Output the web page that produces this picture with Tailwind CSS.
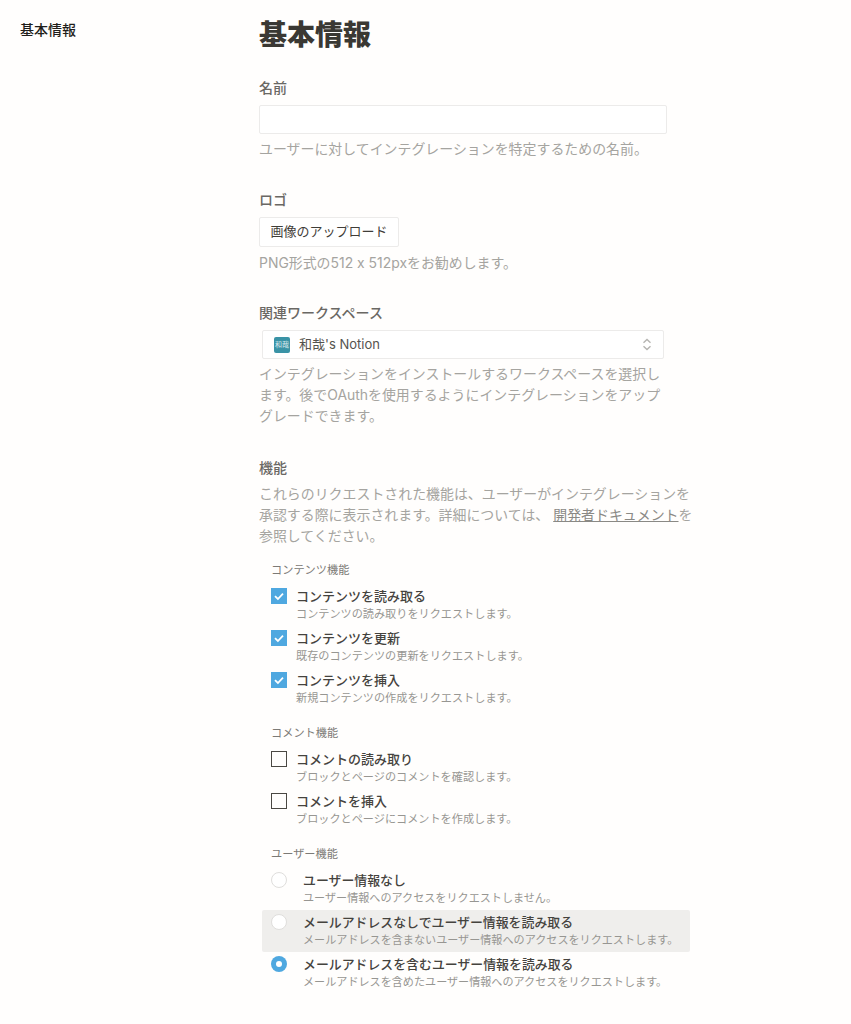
<!DOCTYPE html>
<html lang="ja">
<head>
  <meta charset="UTF-8" />
  <title>基本情報</title>
  <script src="https://cdn.jsdelivr.net/npm/@tailwindcss/browser@4"></script>
</head>
<body class="bg-[#fffefd] text-[#37352f] font-['Inter','Noto_Sans_CJK_JP',sans-serif]">
  <div class="flex h-[1024px] overflow-hidden">
    <!-- サイドバー -->
    <nav class="w-[259px] shrink-0 pl-5 pt-5">
      <a class="block text-sm leading-5 font-medium text-[#1f1e1b]">基本情報</a>
    </nav>

    <main class="w-[440px] pt-[14px]">
      <h1 class="text-[28px] leading-[42px] font-extrabold text-[#3a3833]">基本情報</h1>

      <!-- 名前 -->
      <label class="block mt-[21px] text-sm leading-[21px] font-medium text-[#6a6864]">名前</label>
      <input type="text" class="block mt-[7px] w-[408px] h-[29px] bg-white border border-[#ecebea] rounded-[2px]" />
      <p class="mt-[5px] text-[13.93px] leading-[21px] text-[#a5a4a0]">ユーザーに対してインテグレーションを特定するための名前。</p>

      <!-- ロゴ -->
      <label class="block mt-[29px] text-sm leading-[21px] font-medium text-[#6a6864]">ロゴ</label>
      <button class="block mt-[7px] w-[140px] h-[30px] bg-white border border-[#ecebea] rounded-[2px] text-[13px] text-[#3f3d38]">画像のアップロード</button>
      <p class="mt-[6px] text-[13.93px] leading-[21px] text-[#a5a4a0]">PNG形式の512 x 512pxをお勧めします。</p>

      <!-- 関連ワークスペース -->
      <label class="block mt-[28px] text-sm leading-[21px] font-medium text-[#6a6864]">関連ワークスペース</label>
      <div class="flex items-center ml-[3px] mt-[7px] w-[402px] h-[29px] pl-[11px] pr-[11px] bg-white border border-[#ecebea] rounded-[2px]">
        <span class="flex items-center justify-center w-4 h-4 rounded-[2px] bg-[#3a93a6] text-[7px] leading-none text-white/80">和哉</span>
        <span class="ml-[9px] text-[13px] text-[#55534e]">和哉's Notion</span>
        <svg class="ml-auto" width="10" height="13" viewBox="0 0 10 13" fill="none" stroke="#b5b4b1" stroke-width="1.4"><path d="M1.5 4.8 5 1.5l3.5 3.3M1.5 8.2 5 11.5l3.5-3.3" /></svg>
      </div>
      <p class="mt-[5px] w-[408px] text-[13.93px] leading-[21px] text-[#a5a4a0]">インテグレーションをインストールするワークスペースを選択します。後でOAuthを使用するようにインテグレーションをアップグレードできます。</p>

      <!-- 機能 -->
      <label class="block mt-[30px] text-sm leading-[21px] font-medium text-[#6a6864]">機能</label>
      <p class="mt-[6px] w-[436px] text-[13.93px] leading-[21px] text-[#a5a4a0]">これらのリクエストされた機能は、ユーザーがインテグレーションを承認する際に表示されます。詳細については、 <a class="underline text-[#8a8985]">開発者ドキュメント</a>を参照してください。</p>

      <h3 class="mt-[15px] pl-3 text-[11.2px] leading-4 text-[#7c7a76]">コンテンツ機能</h3>
      <div class="mt-[7px]">
        <div class="flex h-[42px] pt-[2px] pl-3">
          <span class="mt-[1px] flex items-center justify-center w-4 h-4 bg-[#4fa8e0]"><svg width="12" height="12" viewBox="0 0 12 12" fill="none" stroke="white" stroke-width="1.8"><path d="M2 6.2 4.9 9 10 3.6" /></svg></span>
          <div class="ml-[9px]">
            <div class="text-[13px] leading-[18px] font-medium text-[#45433e]">コンテンツを読み取る</div>
            <div class="text-[11.15px] leading-[18px] text-[#979692]">コンテンツの読み取りをリクエストします。</div>
          </div>
        </div>
        <div class="flex h-[42px] pt-[2px] pl-3">
          <span class="mt-[1px] flex items-center justify-center w-4 h-4 bg-[#4fa8e0]"><svg width="12" height="12" viewBox="0 0 12 12" fill="none" stroke="white" stroke-width="1.8"><path d="M2 6.2 4.9 9 10 3.6" /></svg></span>
          <div class="ml-[9px]">
            <div class="text-[13px] leading-[18px] font-medium text-[#45433e]">コンテンツを更新</div>
            <div class="text-[11.15px] leading-[18px] text-[#979692]">既存のコンテンツの更新をリクエストします。</div>
          </div>
        </div>
        <div class="flex h-[42px] pt-[2px] pl-3">
          <span class="mt-[1px] flex items-center justify-center w-4 h-4 bg-[#4fa8e0]"><svg width="12" height="12" viewBox="0 0 12 12" fill="none" stroke="white" stroke-width="1.8"><path d="M2 6.2 4.9 9 10 3.6" /></svg></span>
          <div class="ml-[9px]">
            <div class="text-[13px] leading-[18px] font-medium text-[#45433e]">コンテンツを挿入</div>
            <div class="text-[11.15px] leading-[18px] text-[#979692]">新規コンテンツの作成をリクエストします。</div>
          </div>
        </div>
      </div>

      <h3 class="mt-[14px] pl-3 text-[11.2px] leading-4 text-[#7c7a76]">コメント機能</h3>
      <div class="mt-[7px]">
        <div class="flex h-[42px] pt-[2px] pl-3">
          <span class="mt-[1px] w-4 h-4 border-[1.5px] border-[#4a4843]"></span>
          <div class="ml-[9px]">
            <div class="text-[13px] leading-[18px] font-medium text-[#45433e]">コメントの読み取り</div>
            <div class="text-[11.15px] leading-[18px] text-[#979692]">ブロックとページのコメントを確認します。</div>
          </div>
        </div>
        <div class="flex h-[42px] pt-[2px] pl-3">
          <span class="mt-[1px] w-4 h-4 border-[1.5px] border-[#4a4843]"></span>
          <div class="ml-[9px]">
            <div class="text-[13px] leading-[18px] font-medium text-[#45433e]">コメントを挿入</div>
            <div class="text-[11.15px] leading-[18px] text-[#979692]">ブロックとページにコメントを作成します。</div>
          </div>
        </div>
      </div>

      <h3 class="mt-[14px] pl-3 text-[11.2px] leading-4 text-[#7c7a76]">ユーザー機能</h3>
      <div class="mt-[7px]">
        <div class="flex h-[41px] pt-[2px] pl-3">
          <span class="mt-[1px] w-4 h-4 rounded-full bg-white border border-[#dfdedc]"></span>
          <div class="ml-[16px] pt-[1px]">
            <div class="text-[12.9px] leading-[18px] font-medium text-[#45433e]">ユーザー情報なし</div>
            <div class="text-[11.1px] leading-4 text-[#979692]">ユーザー情報へのアクセスをリクエストしません。</div>
          </div>
        </div>
        <div class="flex h-[42px] pt-[3px] pl-[9px] ml-[3px] w-[428px] rounded-[2px] bg-[#efeeec]">
          <span class="mt-[1px] w-4 h-4 rounded-full bg-white border border-[#dfdedc]"></span>
          <div class="ml-[16px] pt-[1px]">
            <div class="text-[12.9px] leading-[18px] font-medium text-[#45433e]">メールアドレスなしでユーザー情報を読み取る</div>
            <div class="text-[11.1px] leading-4 text-[#979692]">メールアドレスを含まないユーザー情報へのアクセスをリクエストします。</div>
          </div>
        </div>
        <div class="flex h-[42px] pt-[3px] pl-3">
          <span class="mt-[1px] flex items-center justify-center w-4 h-4 rounded-full bg-[#4fa8e0]"><span class="w-[6px] h-[6px] rounded-full bg-white"></span></span>
          <div class="ml-[16px] pt-[1px]">
            <div class="text-[12.9px] leading-[18px] font-medium text-[#45433e]">メールアドレスを含むユーザー情報を読み取る</div>
            <div class="text-[11.1px] leading-4 text-[#979692]">メールアドレスを含めたユーザー情報へのアクセスをリクエストします。</div>
          </div>
        </div>
      </div>
    </main>
  </div>
</body>
</html>
